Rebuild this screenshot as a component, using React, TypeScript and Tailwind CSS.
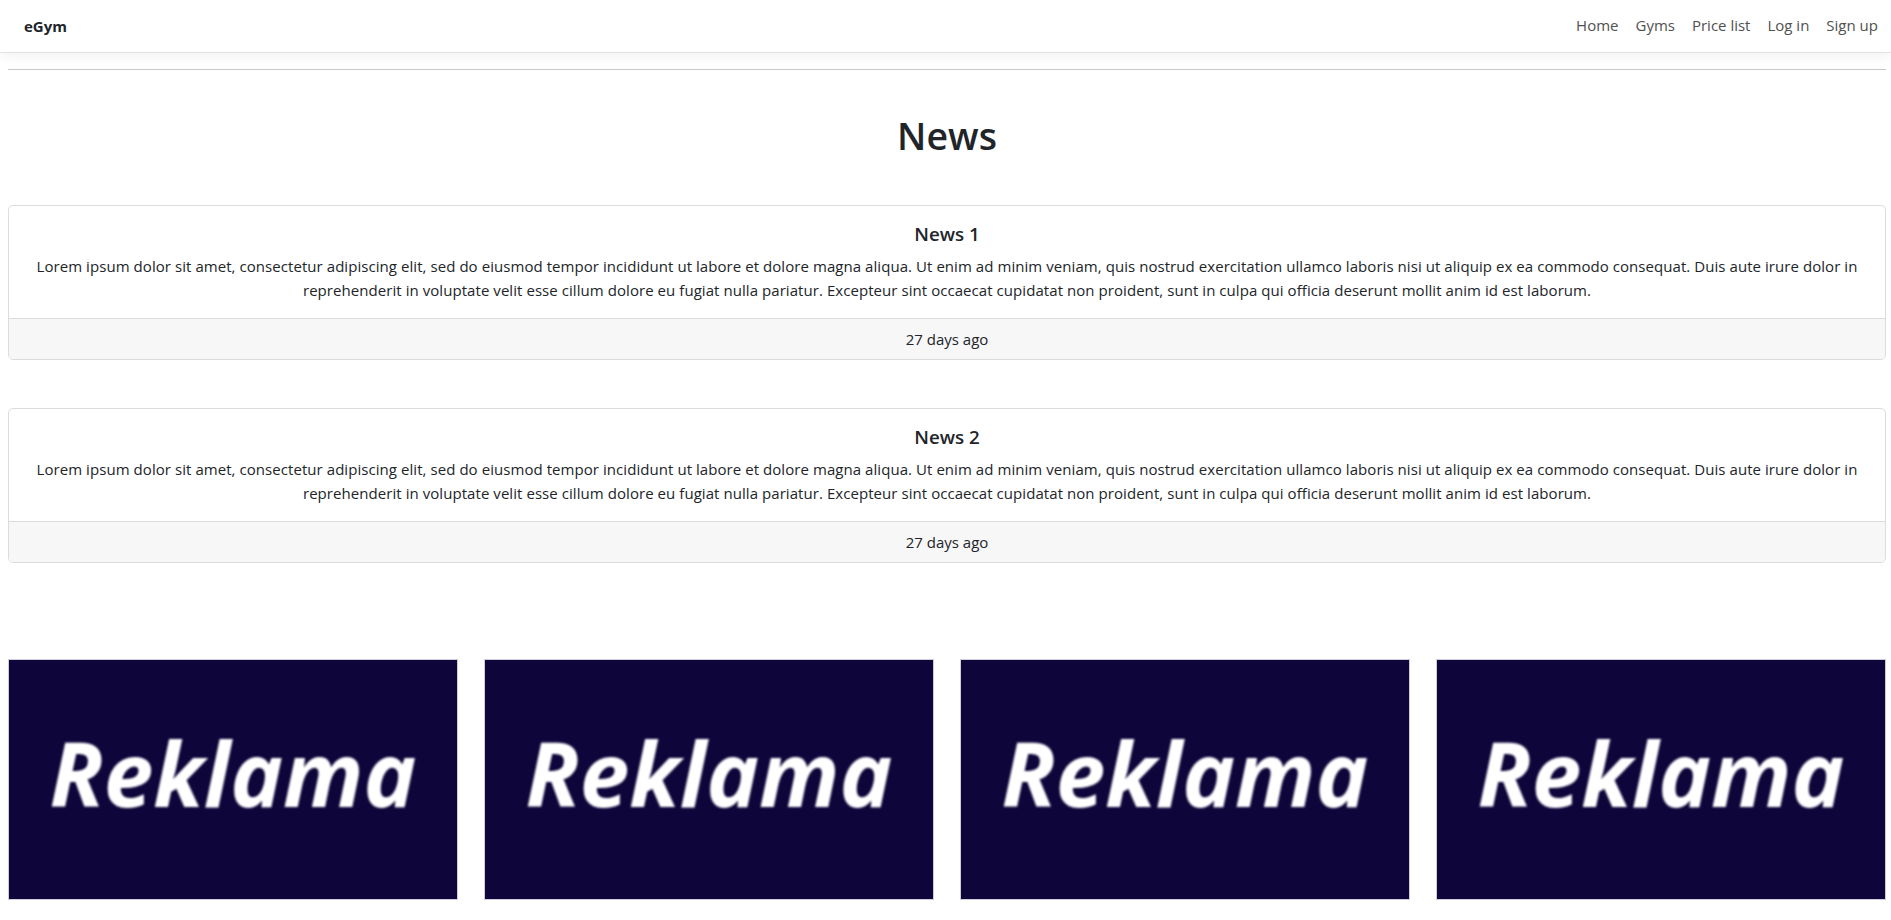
import React from "react";

const LOREM =
  "Lorem ipsum dolor sit amet, consectetur adipiscing elit, sed do eiusmod tempor incididunt ut labore et dolore magna aliqua. Ut enim ad minim veniam, quis nostrud exercitation ullamco laboris nisi ut aliquip ex ea commodo consequat. Duis aute irure dolor in reprehenderit in voluptate velit esse cillum dolore eu fugiat nulla pariatur. Excepteur sint occaecat cupidatat non proident, sunt in culpa qui officia deserunt mollit anim id est laborum.";

function NewsCard({ title, className }: { title: string; className?: string }) {
  return (
    <div className={"border border-[#dcdcdc] rounded-[5px] overflow-hidden bg-white " + (className ?? "")}>
      <div className="px-4 py-4 text-center">
        <h5 className="text-[18.75px] leading-[24px] font-semibold mb-2 text-[#212529]">{title}</h5>
        <p className="text-[15px] leading-6 tracking-[0.06px] text-[#212529]">{LOREM}</p>
      </div>
      <div className="border-t border-[#dcdcdc] bg-[#f7f7f7] py-2 text-center text-[15px] leading-6 text-[#212529]">
        27 days ago
      </div>
    </div>
  );
}

function Ad() {
  return (
    <div className="h-[241px] bg-[#0e063a] border border-[#cfcdd9] flex items-center justify-center overflow-hidden">
      <span className="text-white italic font-bold text-[89px] leading-none -mt-[14px] blur-[1.2px] font-['Open_Sans',sans-serif]">
        Reklama
      </span>
    </div>
  );
}

export default function App() {
  const links = ["Home", "Gyms", "Price list", "Log in", "Sign up"];
  return (
    <div className="min-h-screen bg-white text-[#212529] font-['Open_Sans','Noto_Sans',sans-serif]">
      <nav className="relative z-10 h-[53px] flex items-center justify-between pl-6 pr-[13px] bg-white border-b border-[#e2e2e2] shadow-[0_4px_12px_rgba(0,0,0,0.05)]">
        <span className="font-bold text-[15px] text-[#212529]">eGym</span>
        <ul className="flex items-center gap-[17px] -mt-[3px]">
          {links.map((l) => (
            <li key={l}>
              <a className="text-[15px] leading-6 text-[#505050]" href="#">
                {l}
              </a>
            </li>
          ))}
        </ul>
      </nav>
      <main className="pl-2 pr-[5px] pb-2">
        <hr className="mt-[16px] border-0 border-t border-[#c8c9ca]" />
        <h1 className="mt-[43px] text-center text-[37.5px] leading-[45px] font-semibold text-[#212529]">News</h1>
        <NewsCard title="News 1" className="mt-[47px]" />
        <NewsCard title="News 2" className="mt-[48px]" />
        <div className="mt-[96px] grid grid-cols-4 gap-[26px]">
          <Ad />
          <Ad />
          <Ad />
          <Ad />
        </div>
      </main>
    </div>
  );
}
